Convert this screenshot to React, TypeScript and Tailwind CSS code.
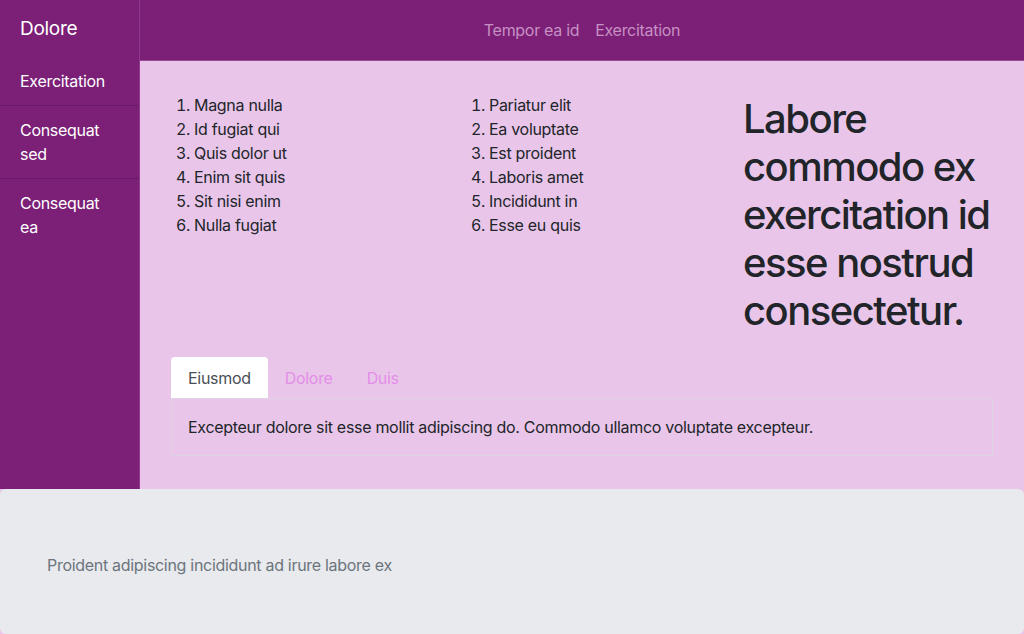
export default function App() {
  const listA = ['Magna nulla', 'Id fugiat qui', 'Quis dolor ut', 'Enim sit quis', 'Sit nisi enim', 'Nulla fugiat'];
  const listB = ['Pariatur elit', 'Ea voluptate', 'Est proident', 'Laboris amet', 'Incididunt in', 'Esse eu quis'];

  return (
    <div className="min-h-[634px] bg-[#e9c6e9] text-[#212529] font-['Inter',sans-serif] text-base leading-6 tracking-[-0.3px]">
      <div className="flex">
        {/* Sidebar */}
        <aside className="w-[140px] shrink-0 bg-[#7b1f77] border-r border-[#8f3a8b] text-white">
          <div className="h-[57px] px-5 flex items-center text-[19px]">Dolore</div>
          <nav>
            <div className="px-5 py-3 border-b border-[#6a1a66]">Exercitation</div>
            <div className="px-5 py-3 border-b border-[#6a1a66]">Consequat sed</div>
            <div className="px-5 py-3">Consequat ea</div>
          </nav>
        </aside>

        {/* Main */}
        <main className="flex-1">
          <header className="h-[61px] bg-[#7b1f77] border-b border-[#9a4a96] flex items-center justify-center gap-4 text-[#c690c3]">
            <span>Tempor ea id</span>
            <span>Exercitation</span>
          </header>

          <div className="px-[31px] pt-8 pb-[33px]">
            <div className="flex">
              <ol className="list-decimal w-[300px] pl-[23px]">
                {listA.map((t) => (
                  <li key={t}>{t}</li>
                ))}
              </ol>
              <ol className="list-decimal w-[272px] pl-[18px]">
                {listB.map((t) => (
                  <li key={t}>{t}</li>
                ))}
              </ol>
              <h1 className="flex-1 text-[40px] leading-[48px] font-medium tracking-[-0.038em] mt-[2px]">
                Labore commodo ex exercitation id esse nostrud consectetur.
              </h1>
            </div>

            <div className="mt-[22px]">
              <div className="flex">
                <div className="px-4 h-[41px] flex items-center bg-white rounded-t border border-white border-b-0 text-[#495057]">Eiusmod</div>
                <div className="px-[17px] h-[41px] flex items-center text-[#e38ee8]">Dolore</div>
                <div className="px-[17px] h-[41px] flex items-center text-[#e38ee8]">Duis</div>
              </div>
              <div className="border border-[#ddd3e2] px-4 py-4">
                Excepteur dolore sit esse mollit adipiscing do. Commodo ullamco voluptate excepteur.
              </div>
            </div>
          </div>
        </main>
      </div>

      {/* Footer */}
      <footer className="h-[145px] bg-[#e9eaee] rounded-md px-[47px] pt-16 text-[#6c757d]">
        Proident adipiscing incididunt ad irure labore ex
      </footer>
    </div>
  );
}
